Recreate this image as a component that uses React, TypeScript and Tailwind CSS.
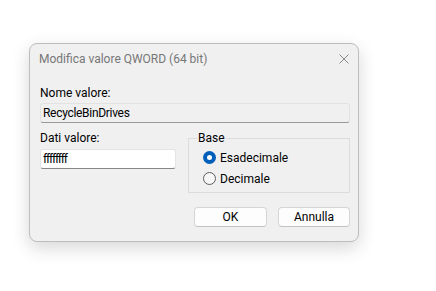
import React from "react";

function Radio({ checked, label }: { checked: boolean; label: string }) {
  return (
    <div className="flex h-[21px] items-center">
      {checked ? (
        <div className="flex h-[13px] w-[13px] items-center justify-center rounded-full bg-[#005fb8]">
          <div className="h-[5px] w-[5px] rounded-full bg-white" />
        </div>
      ) : (
        <div className="h-[13px] w-[13px] rounded-full border border-[#5d5d5d] bg-[#f7f7f7]" />
      )}
      <span className="ml-[4px] leading-[16px]">{label}</span>
    </div>
  );
}

export default function App() {
  return (
    <div
      className="h-[291px] w-[436px] bg-white pl-[29px] pt-[43px] text-[12px] text-black"
      style={{ fontFamily: "Roboto, 'Liberation Sans', sans-serif" }}
    >
      <div className="flex h-[199px] w-[330px] flex-col rounded-[8px] border border-[#bdbdbd] bg-[#f0f0f0] shadow-[0_6px_18px_rgba(0,0,0,0.16)]">
        <div className="flex h-[30px] items-center justify-between pl-[9px] pr-[8px] text-[#777777]">
          <span className="leading-[16px]">Modifica valore QWORD (64 bit)</span>
          <svg width="10" height="10" viewBox="0 0 10 10" className="mr-[1px]">
            <path d="M0.5 0.5 L9.5 9.5 M9.5 0.5 L0.5 9.5" stroke="#8a8a8a" strokeWidth="1" />
          </svg>
        </div>
        <div className="flex flex-col pl-[10px] pr-[8px]">
          <div className="mt-[11px] leading-[16px]">Nome valore:</div>
          <div className="mt-[2px] flex h-[20px] items-center rounded-[3px] border border-[#e2e2e2] border-b-[#9a9a9a] bg-[#f0f0f0] pl-[2px] leading-[16px] tracking-[-0.3px]">
            RecycleBinDrives
          </div>
          <div className="flex">
            <div className="flex w-[136px] flex-col">
              <div className="mt-[7px] leading-[16px]">Dati valore:</div>
              <div className="mt-[3px] flex h-[20px] items-center rounded-[3px] border border-[#e4e4e4] border-b-[#868686] bg-white pl-[2px] leading-[16px] tracking-[-1.2px]">
                ffffffff
              </div>
            </div>
            <div className="relative ml-[12px] mt-[15px] h-[55px] flex-1 border border-[#dcdcdc] pl-[14px] pt-[8px]">
              <span className="absolute left-[8px] top-[-9px] bg-[#f0f0f0] px-[1px] leading-[16px]">Base</span>
              <Radio checked label="Esadecimale" />
              <Radio checked={false} label="Decimale" />
            </div>
          </div>
          <div className="mt-[14px] flex justify-end gap-[11px]">
            <button className="h-[20px] w-[73px] rounded-[4px] border border-[#d5d5d5] border-b-[#c2c2c2] bg-[#fdfdfd] leading-[16px]">
              OK
            </button>
            <button className="h-[20px] w-[72px] rounded-[4px] border border-[#d5d5d5] border-b-[#c2c2c2] bg-[#fdfdfd] leading-[16px]">
              Annulla
            </button>
          </div>
        </div>
      </div>
    </div>
  );
}
